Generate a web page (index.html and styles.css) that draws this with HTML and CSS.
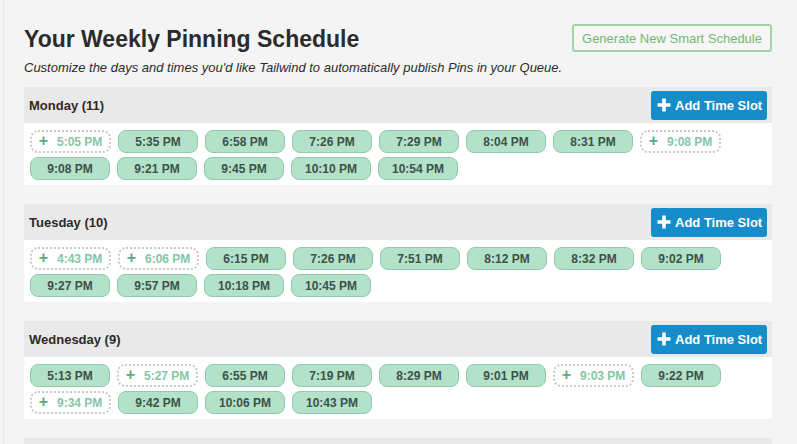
FILE: index.html
```html
<!DOCTYPE html>
<html lang="en">
<head>
  <title>Tailwind - Weekly Pinning Schedule</title>
  <link rel="stylesheet" href="styles.css">
</head>

<body>
  <div class="app">
    <div class="page">
      <!-- Header -->
      <div class="top">
        <div>
          <h1>Your Weekly Pinning Schedule</h1>
          <p class="intro">Customize the days and times you'd like Tailwind to automatically publish Pins in your Queue.</p>
        </div>
        <button class="generate">Generate New Smart Schedule</button>
      </div>

      <!-- Monday -->
      <div class="day">
        <div class="day-head">
          <span class="day-name">Monday (11)</span>
          <button class="add-slot"><svg viewBox="0 0 14 14" width="14" height="14"><path d="M7 0.5V13.5M0.5 7H13.5" stroke="white" stroke-width="3.6"/></svg>Add Time Slot</button>
        </div>
        <div class="slots">
          <span class="slot open"><span class="plus">+</span>5:05 PM</span>
          <span class="slot">5:35 PM</span>
          <span class="slot">6:58 PM</span>
          <span class="slot">7:26 PM</span>
          <span class="slot">7:29 PM</span>
          <span class="slot">8:04 PM</span>
          <span class="slot">8:31 PM</span>
          <span class="slot open"><span class="plus">+</span>9:08 PM</span>
          <span class="slot">9:08 PM</span>
          <span class="slot">9:21 PM</span>
          <span class="slot">9:45 PM</span>
          <span class="slot">10:10 PM</span>
          <span class="slot">10:54 PM</span>
        </div>
      </div>

      <!-- Tuesday -->
      <div class="day">
        <div class="day-head">
          <span class="day-name">Tuesday (10)</span>
          <button class="add-slot"><svg viewBox="0 0 14 14" width="14" height="14"><path d="M7 0.5V13.5M0.5 7H13.5" stroke="white" stroke-width="3.6"/></svg>Add Time Slot</button>
        </div>
        <div class="slots">
          <span class="slot open"><span class="plus">+</span>4:43 PM</span>
          <span class="slot open"><span class="plus">+</span>6:06 PM</span>
          <span class="slot">6:15 PM</span>
          <span class="slot">7:26 PM</span>
          <span class="slot">7:51 PM</span>
          <span class="slot">8:12 PM</span>
          <span class="slot">8:32 PM</span>
          <span class="slot">9:02 PM</span>
          <span class="slot">9:27 PM</span>
          <span class="slot">9:57 PM</span>
          <span class="slot">10:18 PM</span>
          <span class="slot">10:45 PM</span>
        </div>
      </div>

      <!-- Wednesday -->
      <div class="day">
        <div class="day-head">
          <span class="day-name">Wednesday (9)</span>
          <button class="add-slot"><svg viewBox="0 0 14 14" width="14" height="14"><path d="M7 0.5V13.5M0.5 7H13.5" stroke="white" stroke-width="3.6"/></svg>Add Time Slot</button>
        </div>
        <div class="slots">
          <span class="slot">5:13 PM</span>
          <span class="slot open"><span class="plus">+</span>5:27 PM</span>
          <span class="slot">6:55 PM</span>
          <span class="slot">7:19 PM</span>
          <span class="slot">8:29 PM</span>
          <span class="slot">9:01 PM</span>
          <span class="slot open"><span class="plus">+</span>9:03 PM</span>
          <span class="slot">9:22 PM</span>
          <span class="slot open"><span class="plus">+</span>9:34 PM</span>
          <span class="slot">9:42 PM</span>
          <span class="slot">10:06 PM</span>
          <span class="slot">10:43 PM</span>
        </div>
      </div>

      <!-- next day, only its top edge shows -->
      <div class="day">
        <div class="day-head"></div>
      </div>
    </div>
  </div>
</body>
</html>
```

FILE: styles.css
```css
body {
  margin: 0;
  background-color: #f4f4f4;
  font-family: "Liberation Sans", Arial, sans-serif;
  color: #2b2b2b;
  height: 444px;
  overflow: hidden;
}

.app {
  margin-left: 3px;
  border-left: 1px solid #e6e6e6;
  min-height: 100%;
}

.page {
  padding: 24px 25px 0 20px;
}

/* Header */
.top {
  display: flex;
  justify-content: space-between;
  align-items: flex-start;
}

h1 {
  margin: 1px 0 0 0;
  font-size: 23px;
  line-height: 28px;
  font-weight: bold;
  color: #2b2b2b;
}

.intro {
  margin: 7px 0 0 0;
  font-size: 13px;
  line-height: 16px;
  font-style: italic;
  color: #2b2b2b;
}

.generate {
  width: 200px;
  height: 28px;
  padding: 0;
  background-color: #f6f6f6;
  border: 2px solid #a3d2a3;
  border-radius: 3px;
  font-family: inherit;
  font-size: 13px;
  color: #74b874;
}

/* Day sections */
.day {
  margin-top: 19px;
}

.top + .day {
  margin-top: 11px;
}

.day-head {
  display: flex;
  justify-content: space-between;
  align-items: center;
  height: 36px;
  padding: 0 5px;
  background-color: #e9e9e9;
}

.day-name {
  font-size: 13px;
  font-weight: bold;
  color: #2b2b2b;
}

.add-slot {
  display: flex;
  align-items: center;
  gap: 4px;
  width: 116px;
  height: 29px;
  padding: 0 0 0 6px;
  background-color: #168cc8;
  border: none;
  border-radius: 3px;
  font-family: inherit;
  font-size: 13px;
  font-weight: bold;
  color: white;
}

.slots {
  display: flex;
  flex-wrap: wrap;
  gap: 4px 7px;
  padding: 7px 6px 5px 6px;
  background-color: white;
}

.slot {
  box-sizing: border-box;
  display: flex;
  align-items: center;
  justify-content: center;
  width: 80px;
  height: 23px;
  background-color: #b3e1ca;
  border: 1px solid #8fcbab;
  border-radius: 8px;
  font-size: 12px;
  font-weight: bold;
  color: #3c5247;
}

.slot.open {
  width: 81px;
  background-color: white;
  border: 2px dotted #c9c9c9;
  color: #86c6a6;
}

.slot .plus {
  font-size: 16px;
  color: #5aab83;
  margin-right: 9px;
  margin-top: -1px;
}
```
